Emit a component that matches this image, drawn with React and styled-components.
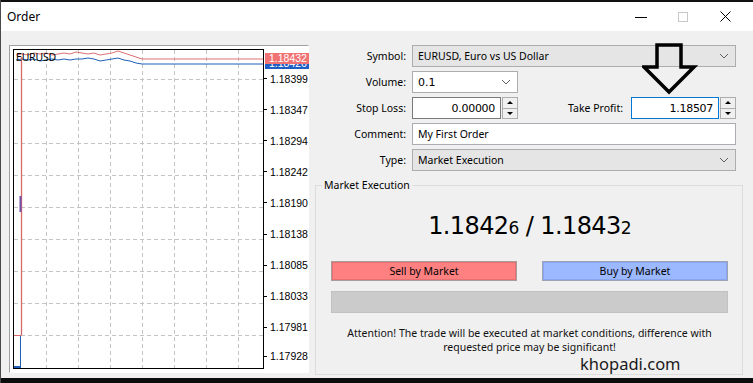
import React from "react";
import styled, { createGlobalStyle } from "styled-components";

const GlobalStyle = createGlobalStyle`
  html, body { margin: 0; padding: 0; }
  body {
    width: 753px;
    height: 383px;
    overflow: hidden;
    background: #f0f0f0;
    font-family: "Noto Sans", "Liberation Sans", sans-serif;
    font-size: 10.5px;
    color: #000;
  }
`;

const ui = `"Noto Sans", "Liberation Sans", sans-serif`;
const num = `"DejaVu Sans", "Liberation Sans", sans-serif`;

const Window = styled.div`
  width: 753px;
  height: 383px;
  display: flex;
  flex-direction: column;
  background: #f0f0f0;
  border-left: 1px solid #4a4a4a;
  box-sizing: border-box;
`;

const TopStrip = styled.div`
  height: 2px;
  background: #111;
`;

const TitleBar = styled.div`
  height: 29px;
  background: #fff;
  display: flex;
  align-items: center;
  padding-left: 6px;
  padding-right: 7px;
`;

const Title = styled.div`
  flex: 1;
  font-size: 12px;
  font-family: ${ui};
`;

const Caption = styled.div`
  width: 42px;
  height: 29px;
  display: flex;
  align-items: center;
  justify-content: center;
`;

const Body = styled.div`
  flex: 1;
  display: flex;
  gap: 6px;
  padding: 14px 10px 6px 8px;
  min-height: 0;
`;

const ChartPanel = styled.div`
  width: 295px;
  height: 323px;
  background: #fff;
  border: 1px solid;
  border-color: #a0a0a0 #fff #fff #a0a0a0;
  padding: 3px 0 0 3px;
  display: flex;
  flex-shrink: 0;
`;

const Plot = styled.div`
  position: relative;
  width: 249px;
  height: 318px;
  border: 1px solid #000;
  overflow: hidden;
`;

const PlotSymbol = styled.div`
  position: absolute;
  left: 2px;
  top: 0;
  font-family: ${ui};
  font-size: 10.5px;
  letter-spacing: -0.2px;
`;

const Axis = styled.div`
  position: relative;
  flex: 1;
  display: flex;
  flex-direction: column;
  padding-top: 14px;
`;

const Tick = styled.div`
  height: 32px;
  display: flex;
  align-items: center;
  gap: 3px;
  font-family: "Liberation Sans", sans-serif;
  font-size: 10.5px;
  margin-top: ${(p) => (p.last ? "-2px" : "0")};
  &::before {
    content: "";
    width: 3px;
    height: 1px;
    background: #000;
  }
`;

const PriceTag = styled.div`
  position: absolute;
  left: 1px;
  top: ${(p) => p.top}px;
  width: 40px;
  height: ${(p) => p.h}px;
  overflow: hidden;
  padding-left: 4px;
  background: ${(p) => p.bg};
  color: #fff;
  font-family: "Liberation Sans", sans-serif;
  font-size: 10.5px;
  line-height: 11px;
`;

const TagText = styled.div`
  margin-top: ${(p) => p.shift || 0}px;
`;

const FormColumn = styled.div`
  position: relative;
  flex: 1;
  display: flex;
  flex-direction: column;
`;

const FormGrid = styled.div`
  display: grid;
  grid-template-columns: 91px 1fr;
  grid-auto-rows: 22px;
  column-gap: 6px;
  row-gap: 4px;
  margin-right: 7px;
`;

const Label = styled.div`
  display: flex;
  align-items: center;
  justify-content: flex-end;
  font-family: ${ui};
  font-size: 10.5px;
  white-space: nowrap;
`;

const Select = styled.div`
  display: flex;
  align-items: center;
  justify-content: space-between;
  box-sizing: border-box;
  width: ${(p) => p.width || "100%"};
  height: 22px;
  padding: 0 6px 0 5px;
  background: ${(p) => (p.white ? "#fff" : "#e5e5e5")};
  border: 1px solid #adadad;
  font-family: ${(p) => (p.numeric ? num : ui)};
  font-size: ${(p) => (p.numeric ? "11px" : "10.5px")};
  color: #000;
`;

const TextField = styled.div`
  display: flex;
  align-items: center;
  box-sizing: border-box;
  height: 22px;
  padding: 0 5px;
  background: #fff;
  border: 1px solid #abadb3;
  font-family: ${ui};
  font-size: 10.5px;
`;

const StopRow = styled.div`
  display: flex;
  align-items: center;
`;

const SpinBox = styled.div`
  display: flex;
  width: ${(p) => p.width}px;
  height: 22px;
`;

const SpinInput = styled.div`
  flex: 1;
  box-sizing: border-box;
  display: flex;
  align-items: center;
  justify-content: flex-end;
  padding-right: 5px;
  background: #fff;
  border: 1px solid ${(p) => (p.focused ? "#0078d7" : "#7a7a7a")};
  font-family: ${num};
  font-size: 11px;
  letter-spacing: -0.3px;
`;

const Spinner = styled.div`
  width: 16px;
  box-sizing: border-box;
  margin-left: 1px;
  border: 1px solid #adadad;
  background: #f0f0f0;
  display: flex;
  flex-direction: column;
`;

const SpinHalf = styled.div`
  flex: 1;
  display: flex;
  align-items: center;
  justify-content: center;
  border-top: ${(p) => (p.lower ? "1px solid #adadad" : "none")};
  &::after {
    content: "";
    border-left: 3px solid transparent;
    border-right: 3px solid transparent;
    ${(p) => (p.lower ? "border-top: 3px solid #000;" : "border-bottom: 3px solid #000;")}
  }
`;

const InlineLabel = styled(Label)`
  flex: 1;
  padding-right: 8px;
`;

const GroupBox = styled.fieldset`
  margin: 7px 0 0 0;
  padding: 0 14px 0 15px;
  border: 1px solid #dcdcdc;
  flex: 1;
  display: flex;
  flex-direction: column;
  min-width: 0;
`;

const Legend = styled.legend`
  margin-left: -9px;
  padding: 0 2px;
  font-family: ${ui};
  font-size: 10.5px;
  line-height: 14px;
`;

const Quote = styled.div`
  margin-top: 20px;
  text-align: center;
  font-family: ${num};
  font-size: 24px;
  line-height: 28px;
  letter-spacing: -0.6px;
`;

const Pip = styled.span`
  font-size: 17px;
`;

const ButtonRow = styled.div`
  display: flex;
  gap: 25px;
  margin-top: 19px;
`;

const MarketButton = styled.button`
  flex: 1;
  height: 20px;
  padding: 0;
  border: 1px solid ${(p) => (p.sell ? "#a89c9c" : "#9ca4b4")};
  box-shadow: inset 0 0 0 1px ${(p) => (p.sell ? "#e87070" : "#8aa6f0")};
  background: ${(p) => (p.sell ? "#ff8080" : "#9cb8ff")};
  font-family: ${ui};
  font-size: 10.5px;
  color: #000;
`;

const Progress = styled.div`
  height: 20px;
  margin-top: 10px;
  background: #cbcbcb;
  border: 1px solid #c2c2c2;
`;

const Attention = styled.div`
  margin-top: 13px;
  text-align: center;
  font-family: ${ui};
  font-size: 10.5px;
  line-height: 14px;
  color: #111;
`;

const Watermark = styled.div`
  margin: -1px 0 0 249px;
  font-family: ${ui};
  font-size: 16.5px;
  line-height: 21px;
  color: #1a1a1a;
`;

const BottomStrip = styled.div`
  height: 5px;
  background: #0c0c0c;
`;

const ArrowMark = styled.svg`
  position: absolute;
  left: 327px;
  top: -2px;
`;

const Chevron = () => (
  <svg width="10" height="6" viewBox="0 0 10 6">
    <path d="M1 1 L5 5 L9 1" fill="none" stroke="#606060" strokeWidth="1" />
  </svg>
);

const gridX = [32, 64, 96, 128, 160, 192, 224];
const gridY = [29, 61, 93, 125, 157, 189, 221, 253, 285];
const ticks = ["1.18399", "1.18347", "1.18294", "1.18242", "1.18190", "1.18138", "1.18085", "1.18033", "1.17981", "1.17928"];

const askLine =
  "2,5 8,4 14,5 20,3 26,4 32,3 38,5 44,4 50,3 56,4 62,2 68,3 74,4 80,3 86,5 92,4 98,3 104,1 110,3 116,5 122,7 128,9 249,9";
const bidLine =
  "2,10 8,9 14,10 20,9 26,11 32,10 38,9 44,10 50,9 56,10 62,9 68,9 74,8 80,9 86,11 92,10 98,9 104,8 110,10 116,11 122,13 128,14 249,14";

function Chart() {
  return (
    <ChartPanel>
      <Plot>
        <svg width="249" height="318">
          {gridX.map((x) => (
            <line key={x} x1={x + 0.5} y1="0" x2={x + 0.5} y2="318" stroke="#c4c4c4" strokeDasharray="4 3" />
          ))}
          {gridY.map((y) => (
            <line key={y} x1="0" y1={y + 0.5} x2="249" y2={y + 0.5} stroke="#c4c4c4" strokeDasharray="4 3" />
          ))}
          <polyline points={askLine} fill="none" stroke="#e07070" strokeWidth="1" />
          <polyline points={bidLine} fill="none" stroke="#2060b8" strokeWidth="1" />
          <line x1="7.5" y1="7" x2="7.5" y2="285" stroke="#d86868" strokeWidth="1.3" />
          <line x1="0" y1="285.5" x2="7.5" y2="285.5" stroke="#d86868" />
          <line x1="6.5" y1="286" x2="6.5" y2="318" stroke="#2060b8" />
          <line x1="0" y1="317" x2="7" y2="317" stroke="#2060b8" strokeWidth="2" />
          <line x1="6.5" y1="146" x2="6.5" y2="162" stroke="#7050a8" strokeWidth="2" />
        </svg>
        <PlotSymbol>EURUSD</PlotSymbol>
      </Plot>
      <Axis>
        {ticks.map((t, i) => (
          <Tick key={t} last={i === ticks.length - 1}>{t}</Tick>
        ))}
        <PriceTag top={15} h={5} bg="#1f5fc4">
          <TagText shift={-6}>1.18426</TagText>
        </PriceTag>
        <PriceTag top={4} h={11} bg="#f07272">
          <TagText>1.18432</TagText>
        </PriceTag>
      </Axis>
    </ChartPanel>
  );
}

export default function App() {
  return (
    <>
      <GlobalStyle />
      <Window>
        <TopStrip />
        <TitleBar>
          <Title>Order</Title>
          <Caption>
            <svg width="12" height="10" viewBox="0 0 12 10">
              <line x1="0" y1="5.5" x2="12" y2="5.5" stroke="#000" />
            </svg>
          </Caption>
          <Caption>
            <svg width="10" height="10" viewBox="0 0 10 10">
              <rect x="0.5" y="0.5" width="9" height="9" fill="none" stroke="#c8c8c8" />
            </svg>
          </Caption>
          <Caption>
            <svg width="11" height="11" viewBox="0 0 11 11">
              <path d="M0.5 0.5 L10.5 10.5 M10.5 0.5 L0.5 10.5" stroke="#000" strokeWidth="1" />
            </svg>
          </Caption>
        </TitleBar>
        <Body>
          <Chart />
          <FormColumn>
            <FormGrid>
              <Label>Symbol:</Label>
              <Select>
                <span>EURUSD, Euro vs US Dollar</span>
                <Chevron />
              </Select>
              <Label>Volume:</Label>
              <Select white numeric width="106px">
                <span>0.1</span>
                <Chevron />
              </Select>
              <Label>Stop Loss:</Label>
              <StopRow>
                <SpinBox width={106}>
                  <SpinInput>0.00000</SpinInput>
                  <Spinner>
                    <SpinHalf />
                    <SpinHalf lower />
                  </Spinner>
                </SpinBox>
                <InlineLabel>Take Profit:</InlineLabel>
                <SpinBox width={105}>
                  <SpinInput focused>1.18507</SpinInput>
                  <Spinner>
                    <SpinHalf />
                    <SpinHalf lower />
                  </Spinner>
                </SpinBox>
              </StopRow>
              <Label>Comment:</Label>
              <TextField>My First Order</TextField>
              <Label>Type:</Label>
              <Select>
                <span>Market Execution</span>
                <Chevron />
              </Select>
            </FormGrid>
            <GroupBox>
              <Legend>Market Execution</Legend>
              <Quote>
                1.1842<Pip>6</Pip> / 1.1843<Pip>2</Pip>
              </Quote>
              <ButtonRow>
                <MarketButton sell>Sell by Market</MarketButton>
                <MarketButton>Buy by Market</MarketButton>
              </ButtonRow>
              <Progress />
              <Attention>
                Attention! The trade will be executed at market conditions, difference with
                <br />
                requested price may be significant!
              </Attention>
              <Watermark>khopadi.com</Watermark>
            </GroupBox>
            <ArrowMark width="58" height="52" viewBox="0 0 58 52">
              <path
                d="M15 2 L39 2 L39 24 L52 24 L27 49 L2 24 L15 24 Z"
                fill="none"
                stroke="#000"
                strokeWidth="3.5"
                strokeLinejoin="miter"
              />
            </ArrowMark>
          </FormColumn>
        </Body>
        <BottomStrip />
      </Window>
    </>
  );
}
